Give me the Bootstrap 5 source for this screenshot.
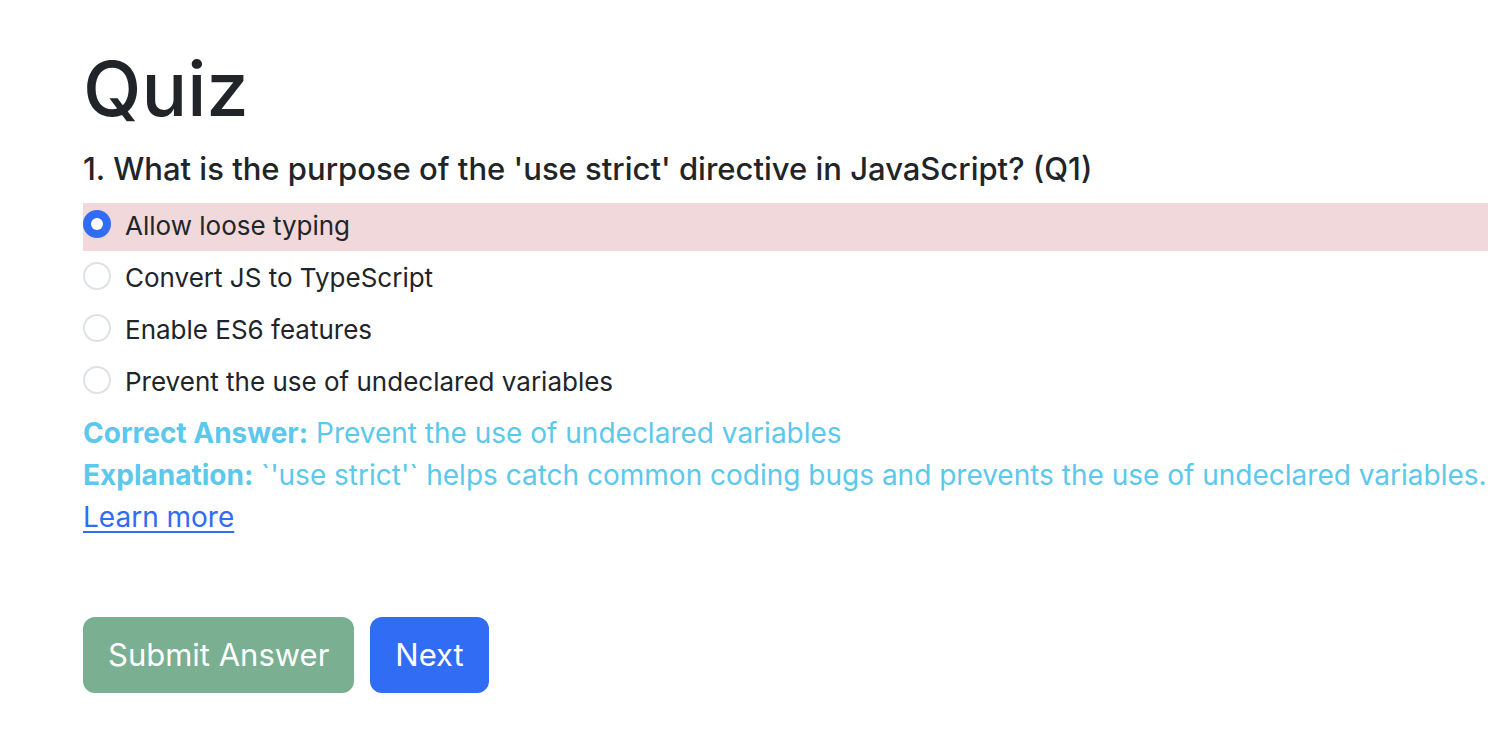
<!DOCTYPE html>
<html lang="en">
<head>
<meta charset="utf-8">
<meta name="viewport" content="width=device-width, initial-scale=1">
<title>Quiz</title>
<link href="https://cdn.jsdelivr.net/npm/bootstrap@5.3.0/dist/css/bootstrap.min.css" rel="stylesheet">
<style>
body { font-family: Inter, "Liberation Sans", sans-serif; color: #212529; }
.quiz { padding: 40px 0 40px 83px; }
.quiz-title { font-size: 76px; line-height: 96px; margin-bottom: 14px; }
.quiz-question { font-size: 31px; line-height: 38px; margin-bottom: 15px; }
.quiz-option { font-size: 26px; line-height: 46px; min-height: 48px; margin-bottom: 4px; padding-left: 42px; }
.quiz-option .form-check-input { width: 28px; height: 28px; margin-top: 7px; margin-left: -42px; border: 2px solid #dee2e6; }
.quiz-option .form-check-input:checked { background-color: #316cf4; border-color: #316cf4; }
.quiz-option.wrong { background-color: #f1d8da; }
.quiz-feedback { font-size: 28px; line-height: 42px; margin-top: 5px; color: #5bc8ec; }
.quiz-feedback a { color: #316cf4; text-underline-offset: 4px; }
.quiz-actions { margin-top: 79px; }
.quiz-actions .btn { font-size: 31px; line-height: 48px; padding: 12px 23px; border-width: 2px; border-radius: 12px; }
.quiz-actions .btn-success { --bs-btn-disabled-bg: #7aaf92; --bs-btn-disabled-border-color: #7aaf92; --bs-btn-disabled-opacity: 1; }
.quiz-actions .btn-primary { --bs-btn-bg: #316cf4; --bs-btn-border-color: #316cf4; }
</style>
</head>
<body>
<main class="quiz">
  <h1 class="quiz-title">Quiz</h1>
  <form>
    <h2 class="quiz-question" id="question">1. What is the purpose of the 'use strict' directive in JavaScript? (Q1)</h2>
    <div role="radiogroup" aria-labelledby="question">
      <div class="form-check quiz-option wrong">
        <input class="form-check-input" type="radio" name="answer" id="a1" checked>
        <label class="form-check-label" for="a1">Allow loose typing</label>
      </div>
      <div class="form-check quiz-option">
        <input class="form-check-input" type="radio" name="answer" id="a2">
        <label class="form-check-label" for="a2">Convert JS to TypeScript</label>
      </div>
      <div class="form-check quiz-option">
        <input class="form-check-input" type="radio" name="answer" id="a3">
        <label class="form-check-label" for="a3">Enable ES6 features</label>
      </div>
      <div class="form-check quiz-option">
        <input class="form-check-input" type="radio" name="answer" id="a4">
        <label class="form-check-label" for="a4">Prevent the use of undeclared variables</label>
      </div>
    </div>
    <div class="quiz-feedback">
      <div><strong>Correct Answer:</strong> Prevent the use of undeclared variables</div>
      <div><strong>Explanation:</strong> `'use strict'` helps catch common coding bugs and prevents the use of undeclared variables.</div>
      <a href="#">Learn more</a>
    </div>
    <div class="quiz-actions d-flex gap-3">
      <button type="submit" class="btn btn-success" disabled>Submit Answer</button>
      <button type="button" class="btn btn-primary">Next</button>
    </div>
  </form>
</main>
<script src="https://cdn.jsdelivr.net/npm/bootstrap@5.3.0/dist/js/bootstrap.bundle.min.js"></script>
</body>
</html>
